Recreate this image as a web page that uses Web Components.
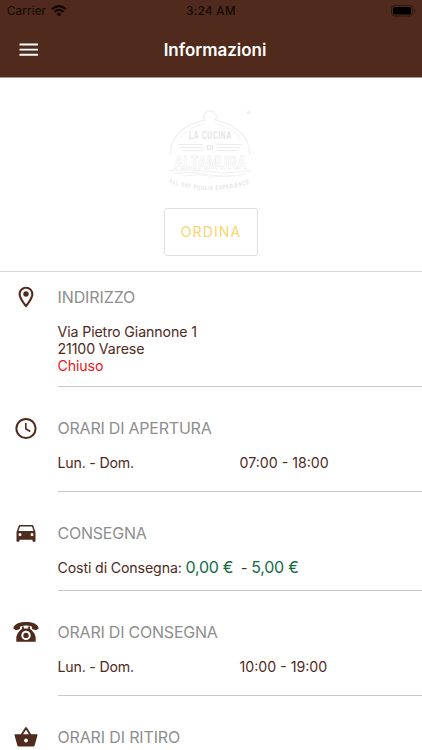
<!DOCTYPE html>
<html lang="it">
<head>
<meta charset="utf-8">
<meta name="viewport" content="width=device-width">
<title>Informazioni</title>
<style>
body{margin:0;background:#fff;height:750px;overflow:hidden;font-family:Inter,"Liberation Sans",sans-serif;color:#4f2a1d}
</style>
</head>
<body>
<info-screen></info-screen>
<script>
const define = (name, html) => customElements.define(name, class extends HTMLElement {
  constructor() {
    super();
    const t = document.createElement('template');
    t.innerHTML = html;
    this.attachShadow({mode: 'open'}).append(t.content.cloneNode(true));
  }
});

define('status-bar', `<style>
:host{display:grid;grid-template-columns:1fr auto 1fr;align-items:center;height:22px;padding:0 7px;color:#120805;font-size:11.5px;line-height:22px}
.left{display:flex;align-items:center;gap:5px}
.carrier{letter-spacing:.2px}
.time{font-weight:500;letter-spacing:.4px}
.battery{justify-self:end;margin-right:-1px}
svg{display:block}
</style>
<div class="left"><span class="carrier">Carrier</span>
<svg width="16" height="12" viewBox="0 0 16 12" fill="none" stroke="#120805" stroke-width="2.1"><path d="M1 4.3Q8-1.900 15 4.300M3.500 6.900Q8 3 12.500 6.900"/><path d="M5.500 8.700Q8 6.700 10.500 8.700L8 11.400Z" fill="#120805" stroke="none"/></svg></div>
<span class="time">3:24 AM</span>
<svg class="battery" width="25" height="12" viewBox="0 0 25 12"><rect x=".5" y=".5" width="21" height="10.500" rx="3" fill="none" stroke="#2d170f"/><rect x="2" y="2" width="18" height="7.500" rx="1.500" fill="#000"/><path d="M23 4v4q1.400-.6 1.400-2T23 4" fill="#2d170f"/></svg>`);

define('nav-bar', `<style>
:host{display:grid;grid-template-columns:1fr auto 1fr;align-items:center;height:55px;padding:0 15px 0 23px;color:#fff}
svg{display:block;margin-left:-4px}
h1{margin:0;font-size:17px;line-height:22px;font-weight:600;letter-spacing:-.02px}
</style>
<svg width="20" height="14" viewBox="0 0 20 14" stroke="#fff" stroke-width="1.900"><path d="M.5 1.500h18.500M.5 6.600h18.500M.5 11.700h18.500"/></svg>
<h1><slot></slot></h1>`);

define('brand-logo', `<style>
:host{display:block;width:84px;height:82px}
svg{display:block;overflow:visible}
text{font-family:"Liberation Sans",sans-serif;fill:#fff;stroke:#e6e6e6;stroke-width:.5}
text.solid{fill:#e4e4e4;stroke:none}
</style>
<svg width="84" height="82" viewBox="0 0 84 82" fill="none" stroke="#ededed">
<path d="M1.500 44C1 25 16 13 36 9q-2-2-1-5 2-4 6-4t6 4q1 3-1 5C66 13 81 25 80.500 44" stroke-width="1.100"/>
<path d="M9 29Q19 16 36 12.500M46 12.500Q63 16 73 29" stroke-width=".6"/>
<circle cx="79.500" cy="1.500" r="1" stroke="#ddd"/>
<path d="M9 33.500h25M11 36.500h23M14 39.500h20M48 33.500h25M48 36.500h23M48 39.500h20" stroke-width="1"/>
<text class="solid" transform="translate(20 27.500) scale(.64 1)" x="0" y="0" font-size="10.500" font-weight="700" textLength="66">LA CUCINA</text>
<text class="solid" x="37.500" y="39" font-size="7.500" font-weight="700" textLength="7" lengthAdjust="spacingAndGlyphs">DI</text>
<text transform="translate(5 57.500) scale(.72 1)" x="0" y="0" font-size="18.500" font-weight="700" textLength="101">ALTAMURA</text>
<path d="M0 59.500Q22 58 41 60.500T82 59.500M5 62.500Q25 60 41 64T77 62.500M15 65q25-3 26 2 7-5 24-2" stroke-width=".8"/>
<g transform="scale(.64 1)"><path id="curve" d="M0 71.500Q64 87 130 71.500" stroke="none"/>
<text class="solid" font-size="6.500" font-weight="700"><textPath href="#curve" textLength="126">ALL DAY PUGLIA EXPERIENCE</textPath></text></g>
</svg>`);

define('order-button', `<style>
:host{display:block}
button{display:block;box-sizing:border-box;width:94px;height:48px;padding:0;background:#fff;border:1px solid #dfdfdf;border-radius:3px;font:400 14px/46px Inter,sans-serif;letter-spacing:1.1px;color:#f8d56e}
</style><button><slot></slot></button>`);

define('ui-icon', `<style>:host{display:block;width:28px;height:28px}svg{display:block;fill:#4f2a1d}</style><svg width="28" height="28" viewBox="0 0 28 28"></svg>`);
const icons = {
  pin: '<path fill-rule="evenodd" d="M14 3.700c-4.100 0-7.400 3.300-7.400 7.300C6.600 16.500 14 24.500 14 24.500s7.400-8 7.400-13.500c0-4-3.300-7.300-7.400-7.300m0 2.100c3 0 5.300 2.300 5.300 5.200 0 3-3 7.500-5.300 10.300C11.700 18.500 8.700 14 8.700 11c0-2.900 2.300-5.200 5.300-5.200"/><circle cx="14" cy="11" r="2.700"/>',
  clock: '<circle cx="14" cy="14.500" r="9.600" fill="none" stroke="#4f2a1d" stroke-width="2"/><path d="M13.800 9v5.800l4.500 2.700" fill="none" stroke="#4f2a1d" stroke-width="1.600"/>',
  car: '<path fill-rule="evenodd" transform="translate(0 .2) scale(1 1.040)" d="M21.400 6.500c-.2-.6-.8-1-1.400-1H8c-.7 0-1.200.4-1.400 1l-2.100 6v8.200c0 .6.400 1 1 1h1c.6 0 1-.4 1-1v-1h13v1c0 .6.400 1 1 1h1c.6 0 1-.4 1-1v-8.200zM8 16.300a1.500 1.500 0 1 1 0-3 1.500 1.500 0 0 1 0 3m12 0a1.500 1.500 0 1 1 0-3 1.500 1.500 0 0 1 0 3M6.500 11.300 8 7h12l1.500 4.300z"/>',
  phone: '<path d="M1.300 10.300C2.500 5.500 8 4.100 14 4.100s11.500 1.400 12.700 6.200c-1.500 2.500-4.600 1.900-6.200.9-.8-.6-.3-1.800-.8-2.600Q14 6.600 8.300 8.600c-.5.800 0 2-.8 2.600-1.600 1-4.700 1.600-6.200-.9"/><path fill-rule="evenodd" d="M10 8.500h1.800v2h4.400v-2H18v2.600c2.700 1.600 5.700 5.700 5.700 9v3.700H4.300v-3.700c0-3.300 3-7.400 5.700-9zM14 12.700a4.700 4.700 0 1 0 0 9.400 4.700 4.700 0 0 0 0-9.400m0 2a2.700 2.700 0 1 1 0 5.400 2.700 2.700 0 0 1 0-5.400"/>',
  basket: '<path fill-rule="evenodd" d="m19.200 11.200-4.400-6.600a1 1 0 0 0-1.600 0l-4.400 6.600H3.500c-.7 0-1.100.5-.9 1.200l2.700 9.800c.2.800.9 1.400 1.800 1.400h13.800c.9 0 1.600-.6 1.800-1.400l2.700-9.800c.2-.7-.2-1.200-.9-1.200zm-8.200 0 3-4.500 3 4.500zm3 8.200a1.900 1.900 0 1 1 0-3.800 1.900 1.900 0 0 1 0 3.800"/>'
};

customElements.define('info-section', class extends HTMLElement {
  constructor() {
    super();
    const t = document.createElement('template');
    t.innerHTML = `<style>
:host{display:grid;grid-template-columns:57.5px 1fr;box-sizing:border-box;height:var(--h,105px)}
.side{padding:calc(var(--top,31px) - 4px) 0 0 11.500px}
.main{box-sizing:border-box;padding-top:var(--top,31px);border-bottom:1px solid #c8c8c8;min-width:0}
h2{margin:0 0 16px;font-size:16px;font-weight:400;line-height:20px;letter-spacing:var(--ls,-.22px);color:#8e8e8e;white-space:nowrap}
.body{font-size:14.200px;line-height:17.200px;letter-spacing:-.12px}
</style><div class="side"><ui-icon></ui-icon></div><div class="main"><h2></h2><div class="body"><slot></slot></div></div>`;
    this.attachShadow({mode: 'open'}).append(t.content.cloneNode(true));
  }
  connectedCallback() {
    this.shadowRoot.querySelector('h2').textContent = this.getAttribute('heading');
    const icon = this.shadowRoot.querySelector('ui-icon');
    icon.shadowRoot.querySelector('svg').innerHTML = icons[this.getAttribute('icon')];
  }
});

define('hours-row', `<style>
:host{display:grid;grid-template-columns:182px 1fr}
.days{letter-spacing:-.2px}
.hours{letter-spacing:0}
</style><span class="days"><slot name="days"></slot></span><span class="hours"><slot></slot></span>`);

define('info-screen', `<style>
:host{display:block;height:750px;overflow:hidden}
header{background:#4f2a1d;height:77px;border-bottom:1px solid #a8948d}
.hero{display:flex;flex-direction:column;align-items:center;box-sizing:border-box;height:194px;padding-top:33px;border-bottom:1px solid #d6d6d6}
order-button{margin-top:15px}
.line{display:block}
.closed{color:#f01420}
.price{font-size:16px;color:#126b43;letter-spacing:-.25px}
.cost{white-space:pre;letter-spacing:-.14px}
</style>
<header><status-bar></status-bar><nav-bar>Informazioni</nav-bar></header>
<div class="hero"><brand-logo></brand-logo><order-button>ORDINA</order-button></div>
<info-section icon="pin" heading="INDIRIZZO" style="--top:15px;--h:115px;--ls:-.1px">
<span class="line">Via Pietro Giannone 1</span><span class="line">21100 Varese</span><span class="line closed">Chiuso</span></info-section>
<info-section icon="clock" heading="ORARI DI APERTURA"><hours-row><span slot="days">Lun. - Dom.</span>07:00 - 18:00</hours-row></info-section>
<info-section icon="car" heading="CONSEGNA" style="--h:99px"><span class="cost">Costi di Consegna: <span class="price">0,00 €</span>  - <span class="price">5,00 €</span></span></info-section>
<info-section icon="phone" heading="ORARI DI CONSEGNA"><hours-row><span slot="days">Lun. - Dom.</span>10:00 - 19:00</hours-row></info-section>
<info-section icon="basket" heading="ORARI DI RITIRO" style="--ls:-.15px"></info-section>`);
</script>
</body>
</html>
